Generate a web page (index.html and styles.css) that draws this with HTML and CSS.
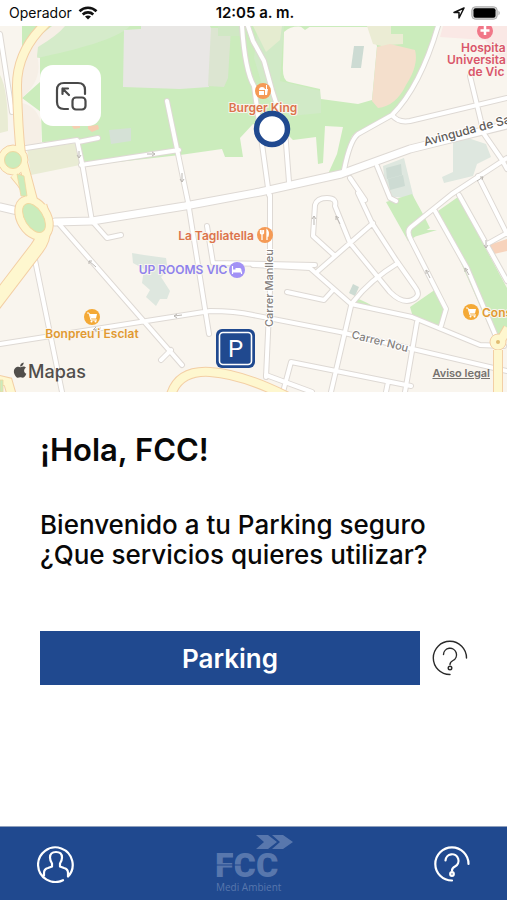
FILE: index.html
```html
<!DOCTYPE html>
<html lang="es">
<head>
<meta charset="utf-8">
<meta name="viewport" content="width=device-width, initial-scale=1">
<title>Parking</title>
<link rel="stylesheet" href="styles.css">
</head>
<body>
<header class="status">
  <div class="status-side">
    <span>Operador</span>
    <svg width="20" height="14" viewBox="0 0 20 14" aria-hidden="true">
      <g fill="none" stroke="#111" stroke-width="2.6"><path d="M1.5 5.2C6.300 .6 13.700 .6 18.500 5.200"/><path d="M4.700 8.500c3-2.800 7.600-2.800 10.600 0"/></g>
      <path d="M10 13.500 7 10.600c1.700-1.500 4.300-1.500 6 0z" fill="#111"/>
    </svg>
  </div>
  <time class="status-time">12:05 a. m.</time>
  <div class="status-side status-end">
    <svg width="12" height="12" viewBox="0 0 12 12" aria-hidden="true"><path d="M11 1 1 5.500h5V11z" fill="none" stroke="#111" stroke-width="1.500" stroke-linejoin="round"/></svg>
    <svg width="30" height="14" viewBox="0 0 30 14" aria-hidden="true"><rect x=".8" y=".8" width="25.400" height="12.400" rx="3.500" fill="#d5d5d5" stroke="#aaa"/><rect x="2.500" y="2.300" width="22" height="9.400" rx="2" fill="#000"/><path d="M27.500 4.500q2.500 2.500 0 5z" fill="#aaa"/></svg>
  </div>
</header>

<section class="map" aria-label="Mapa">
  <svg class="map-canvas" viewBox="0 26 507 366" role="img" aria-label="Mapa de Vic">
    <rect y="26" width="507" height="366" fill="#f9f5ee"/>
    <!-- parks -->
    <path fill="#cbecbc" d="M22 26H437L430 50 415 82 392 114 352 136 343 172 328 174 337 154 343 127 325 126 323 163 318 164 316 137 293 140 287 134 253 124 240 138 243 157 225 157 222 149 180 155 82 166 78 141 42 142 41 112 22 98 40 82 40 58 22 50z"/>
    <path fill="#d5ebca" d="M63 26H130C118 39 75 50 37 58V44z"/>
    <path fill="#f6efe6" d="M52 26h13Q58 35 38 47L37 56Q44 78 22 98L18 80 24 48zM20 103Q35 104 41 122V146H20z"/>
    <path fill="#d1eac7" d="M258 26h26l-4 55 41 10v22l-31 3-24-18-12-40z"/>
    <path fill="#e5ecd0" d="M253 26h29l-2 14-14 12z"/>
    <path fill="#e9e7e5" d="M124 30 141 29V26H210L214 35 209 87 180 89 123 87z"/>
    <path fill="#dce5d1" d="M211 28H231L228 78 224 87 208 86z"/>
    <path fill="#d0e8c4" d="M218 26h26v10h-26z"/>
    <path fill="#f9f5ee" d="M284 32Q292 25 303 27h65l9 19-5 54-14 4-37-5-1-10-31-7Q282 81 283 65z"/>
    <path fill="#cbecbc" d="m300 26 5 4 6-4z"/>
    <path fill="#ebecd4" d="M367 26h24v8h12v10l-15 1-2 2-13-3z"/>
    <path fill="#f4dfcc" d="m377 47 13-3 25 6q4 15-9 35-10 21-28 23l-6-7z"/>
    <path fill="#cddbd3" d="M354 46h10l-3 22h-10z"/>
    <path fill="#d5e1d6" d="m109 130 22-2v13l-20 3z"/>
    <path fill="#f6ceb1" d="m71 125 9 1v2l-6 1zM88 126l10-1 1 4-7 3-4-3z"/>
    <path fill="#e9ecd4" d="M27 149 77 143 80 165 31 175zM0 75Q8 89 8 131L0 133z"/>
    <path fill="#fae8e5" d="M443 26h64v38l-22-24-45-3z"/>
    <path fill="#dee7df" d="m453 133 33 11 5 13-14 7-4 12-29 7-2-6 11-5zM383 166l21-8 10 41-28-3zM132 253l12 2 22 3 2 12-7 7 9 14-3 8h-7l-4 7-10-9 4-7-8-7 2-14-11-6z"/>
    <path fill="#cddbd3" d="m386 168 15-4 1 11-15 4zm2 11 15-4 2 11-15 4zM353 284l6 3-4 9-6-3z"/>
    <path fill="#cbecbc" d="m386 202 26-8 12 22 6 12-22 13zM424 230l13 0-30 9zM438 211l20-14 49 91v52h-12zM410 307l26-18 10 19-6 19-27-10zM356 298q9 3 25 13l-25-6z"/>
    <path fill="#f7d3bc" d="m489 245 18-6v12l-13 3z"/>
    <!-- street casings and surfaces share one geometry -->
    <defs>
      <g id="streets" fill="none" stroke-linecap="round" stroke-linejoin="round">
        <path d="M0 34 12 112M242 26q3 45 12 60l15 109M248 26l5 15 11 20 8 29 13 40 4 52M78 142l20-4M26 148 77 140 82 163 92 221 107 238 121 235M81 165 179 150M167 101 188 202 209 334M35 260 62 392M0 344 210 311Q235 311 253 315L340 332 507 371M60 225 182 365M171 350 161 360M207 226l6 37 102 2"/>
        <path d="M253 265 310 268 351 304 412 317 480 345 504 346M266 377 270 290V195M287 292l37 8 9-10M318 271 373 223M335 256 313 236 315 205Q317 198 327 198T335 206L350 243 390 292Q402 304 412 300T415 287L396 260 372 223 358 193"/>
        <path d="M353 302Q370 280 398 263M351 306 331 392M266 375 312 392M283 392l8-30 120 24M417 322l-12 70M386 392l2-10"/>
        <path d="M438 26Q420 87 392 115L358 134Q350 140 344 170M392 115Q398 123 410 121L507 98M470 76 484 134 502 160 507 169M350 178l15 22M377 166l13 32 6 3M507 158 452 194 411 227Q406 231 411 240L446 309 441 326M459 195 507 281M435 211 467 268 495 334M478 176 507 234M489 243 507 233"/>
      </g>
      <path id="avenue" fill="none" stroke-linecap="round" stroke-linejoin="round" d="M0 207 35 215M55 222 92 221 185 206 260 192 341 174 410 149 507 125"/>
      <path id="ring-road" fill="none" d="M52 18Q16 48 17 88T21 155L34 204M0 161 17 150M14 174Q30 192 35 210M170 398Q177 370 210 372T290 398M-5 379 8 382 12 396M498 350V398M501 340 508 328"/>
      <path id="main-road" fill="none" d="M40 206Q49 233 37 248L-8 307"/>
    </defs>
    <use href="#streets" stroke="#ded9d4" stroke-width="6"/>
    <use href="#avenue" stroke="#ded9d4" stroke-width="9"/>
    <use href="#streets" stroke="#fff" stroke-width="4"/>
    <use href="#avenue" stroke="#fff" stroke-width="7"/>
    <use href="#ring-road" stroke="#f3cfa5" stroke-width="10"/>
    <use href="#main-road" stroke="#f3cfa5" stroke-width="15"/>
    <circle cx="13" cy="160" r="15" fill="#fef7cf" stroke="#f3cfa5"/>
    <ellipse cx="34" cy="218" rx="17" ry="24" transform="rotate(-32 34 218)" fill="#fef7cf" stroke="#f3cfa5"/>
    <circle cx="498" cy="342" r="8" fill="#fef7cf" stroke="#f3cfa5"/>
    <use href="#ring-road" stroke="#fef7cf" stroke-width="8"/>
    <use href="#main-road" stroke="#fef7cf" stroke-width="13"/>
    <circle cx="13" cy="160" r="8.500" fill="#cbecbc" stroke="#f0d8a0"/>
    <ellipse cx="34" cy="218" rx="9" ry="16" transform="rotate(-32 34 218)" fill="#cbecbc" stroke="#f0d8a0"/>
    <path d="m17 174 7 2 3 20h-6zM0 380h3v12H0z" fill="#cbecbc" stroke="#f0d8a0" stroke-width=".8"/>
    <circle cx="498" cy="342" r="2" fill="#e1bc71"/>
    <!-- one-way arrows -->
    <g fill="none" stroke="#bbb7b2">
      <path d="M147 154h8m-3-2 3 2-3 2M79 151v7m-2-3 2 3 2-3M182 173v9m-2-3 2 3 2-3M96 267l-7-6m0 3v-3h3M182 315l-8 1m3-2-3 2 3 2M101 328l-8 2m3-3-3 3 4 1M314 216v9m-2-6 2-3 2 3M340 224l-4-8m0 4v-4l3 2M430 278l-4-8m0 4v-4l3 2M469 275l-4-7m0 4v-4l3 2M486 240v8m-2-3 2 3 2-3M477 181l6-4m-3 0h3l-1 3"/>
    </g>
    <!-- labels -->
    <g class="place" text-anchor="middle">
      <text x="263" y="112" fill="#dc744c">Burger King</text>
      <text x="216" y="240" fill="#dc744c">La Tagliatella</text>
      <text x="183" y="274" fill="#8f82ec">UP ROOMS VIC</text>
      <text x="92" y="338" fill="#e19a32">Bonpreu i Esclat</text>
    </g>
    <g class="place">
      <text x="482" y="317" fill="#e19a32">Cons</text>
      <g fill="#d9566a"><text x="461" y="52">Hospita</text><text x="447" y="64">Universita</text><text x="468" y="76">de Vic</text></g>
    </g>
    <g class="street">
      <text transform="translate(273 327) rotate(-90)">Carrer Manlleu</text>
      <text transform="translate(351 338) rotate(14)">Carrer Nou</text>
      <text class="avenue-name" transform="translate(425 146) rotate(-15)">Avinguda de Sa</text>
    </g>
    <!-- place markers -->
    <g fill="#f59a55"><circle cx="263" cy="91" r="8"/><circle cx="265" cy="235" r="8"/></g>
    <g fill="#f4a936"><circle cx="92" cy="317" r="8"/><circle cx="471" cy="312" r="8"/></g>
    <circle cx="237" cy="270" r="8" fill="#a291f5"/>
    <circle cx="485" cy="31" r="8" fill="#f17788"/>
    <path d="M485 26v9m-4.500-4.500h9" stroke="#fff" stroke-width="2.500"/>
    <path d="M259 90q0-3 3-3t3 3zM259 91h5v4h-5zM265 89h3l-1 6h-2zM266 89v-4h1v4z" fill="#fff"/>
    <path d="M262 230v4m-1.500-4v3q1.500 2 3 0v-3M262 234v6m5 0v-10q2 2 1 6h-1" fill="none" stroke="#fff" stroke-width="1.300"/>
    <path d="M232.500 266v8m0-2h9v2" fill="none" stroke="#fff" stroke-width="1.200"/>
    <path d="M233 269.500h2.500V268h4q2 0 2 2v2H233z" fill="#fff"/>
    <g id="cart" fill="#fff"><path d="M87 313h2l2 7h6" fill="none" stroke="#fff"/><path d="M89.500 314H97l-1 4.500h-5z"/><circle cx="91.500" cy="321.500" r="1"/><circle cx="95.500" cy="321.500" r="1"/></g>
    <use href="#cart" x="379" y="-5"/>
    <circle cx="272" cy="129" r="15.500" fill="#fff" stroke="#20498f" stroke-width="5.500"/>
    <rect x="216" y="329" width="39" height="39" rx="6" fill="#20498f"/>
    <rect x="219.500" y="332.500" width="32" height="32" rx="3.500" fill="none" stroke="#fff" stroke-width="1.600"/>
    <text class="sign" x="235.500" y="357" text-anchor="middle">P</text>
    <!-- provider mark -->
    <path fill="#514e4b" d="M20.500 367.300c-1.500-.8-2.500-.9-3.800-.2-3.500 1.600-3.700 6.100-.7 9.600 1.600 1.800 2.600.7 4.300.5 1.400-.2 2.500 1.200 4-.2 1-.9 1.700-2.200 2-3.300-2.700-1.100-2.900-4.500-.3-5.900-1.400-1.900-3.300-1.600-5.500-.5zM20.100 366.500c0-2.200 1.600-3.700 3.600-4 .2 2.200-1.500 4-3.600 4z"/>
    <text class="provider" x="28" y="378">Mapas</text>
  </svg>
  <button class="expand" type="button" aria-label="Ampliar mapa">
    <svg width="32" height="30" viewBox="0 0 32 30" fill="none" stroke="#494949" stroke-width="2.200" stroke-linecap="round" stroke-linejoin="round" aria-hidden="true"><path d="M13 28H9q-7 0-7-7V9q0-7 7-7h14q7 0 7 7v4"/><rect x="17.500" y="16.500" width="13" height="12" rx="3.500"/><path d="M14 14 7.500 7.500M7.500 13V7.500H13"/></svg>
  </button>
  <a class="legal" href="#legal">Aviso legal</a>
</section>

<main class="content">
  <h1>¡Hola, FCC!</h1>
  <p>Bienvenido a tu Parking seguro<br>¿Que servicios quieres utilizar?</p>
  <div class="service">
    <button class="service-button" type="button">Parking</button>
    <button class="icon-button" type="button" aria-label="Ayuda sobre Parking">
      <svg width="36" height="36" viewBox="0 0 36 36" fill="none" stroke="#2a2a2a" stroke-width="1.400" stroke-linecap="round" aria-hidden="true"><g id="help"><path d="M18 34.500A16.600 16.600 0 1 1 34.500 18"/><path d="M11.500 14.500a6.500 6.500 0 1 1 9.500 6q-3 1.500-3 4"/><circle cx="18" cy="28" r="1.800"/></g></svg>
    </button>
  </div>
</main>

<nav class="tabs" aria-label="Principal">
  <button class="icon-button" type="button" aria-label="Perfil">
    <svg width="38" height="38" viewBox="0 0 38 38" fill="none" stroke="#fff" stroke-width="2.200" stroke-linecap="round" stroke-linejoin="round" aria-hidden="true"><path d="M26 35.200A17.300 17.300 0 1 1 31 31.500V28q0-4-4-5l-4-1.500v-3q2-3 2-6 0-5.500-6-5.500t-6 5.500q0 3 2 6v3L11 23q-4 1-4 5v2.500"/></svg>
  </button>
  <svg class="logo" width="77" height="60" viewBox="0 0 77 60" role="img" aria-label="FCC Medi Ambient">
    <path d="M40 1H52L61 8 52 15H40L48 8zM56 1H67L77 8 67 15H56L64 8z"/>
    <text class="logo-name" x="-1" y="43">FCC</text>
    <path class="logo-cut" d="M0 31h30M18 16v30"/>
    <text class="logo-unit" x="0" y="57">Medi Ambient</text>
  </svg>
  <button class="icon-button" type="button" aria-label="Ayuda">
    <svg width="36" height="36" viewBox="0 0 36 36" fill="none" stroke="#fff" stroke-width="2.200" stroke-linecap="round" aria-hidden="true"><use href="#help"/></svg>
  </button>
</nav>
</body>
</html>
```
FILE: styles.css
```css
* { box-sizing: border-box; }

body {
  margin: 0;
  min-height: 100vh;
  display: flex;
  flex-direction: column;
  background: #fff;
  color: #080808;
  font-family: Inter, "Liberation Sans", sans-serif;
}

button {
  border: 0;
  padding: 0;
  font: inherit;
  cursor: pointer;
}

svg { display: block; }

.status {
  height: 26px;
  padding: 0 6px 0 9px;
  display: grid;
  grid-template-columns: 1fr auto 1fr;
  align-items: center;
  font-size: 14px;
  line-height: 26px;
}

.status-side {
  display: flex;
  align-items: center;
  gap: 6px;
}

.status-end { justify-content: flex-end; }
.status-time { font-weight: 600; font-size: 15px; }

.map { position: relative; }
.map-canvas { width: 100%; height: auto; }

.place text {
  font-size: 12px;
  font-weight: 600;
  paint-order: stroke;
  stroke: #f9f5ee;
  stroke-width: 2px;
}

.street text {
  font-size: 11px;
  font-weight: 500;
  fill: #85817d;
  paint-order: stroke;
  stroke: #fff;
  stroke-width: 2px;
}

.street .avenue-name { font-size: 12px; fill: #5f5c59; }

.sign { font: 400 24px Roboto, sans-serif; fill: #fff; }
.provider { font-size: 18px; font-weight: 500; fill: #514e4b; }

.expand {
  position: absolute;
  top: 39px;
  left: 40px;
  width: 61px;
  height: 61px;
  display: grid;
  place-items: center;
  border-radius: 13px;
  background: #fff;
}

.legal {
  position: absolute;
  right: 17px;
  bottom: 11px;
  color: #76726e;
  font-size: 11px;
  font-weight: 600;
  line-height: 16px;
}

.content {
  flex: 1;
  padding: 38px 39px 40px 40px;
}

h1 {
  margin: 0 0 40px;
  font-size: 31px;
  font-weight: 600;
  line-height: 40px;
}

p {
  margin: 0 0 61px;
  font-size: 26px;
  font-weight: 500;
  line-height: 30px;
}

.service {
  display: flex;
  align-items: center;
  gap: 12px;
}

.service-button {
  flex: 1;
  height: 54px;
  background: #20498f;
  color: #fff;
  font-size: 26px;
  font-weight: 600;
}

.icon-button { background: none; color: inherit; }

.tabs {
  height: 74px;
  padding: 0 37px;
  display: flex;
  align-items: center;
  justify-content: space-between;
  border-top: 1px solid #8fa0bd;
  background: #20498f;
}

.logo { fill: #5877ad; }
.logo-name { font: 900 34px Roboto, sans-serif; }
.logo-unit { font: 10px "Open Sans", sans-serif; }
.logo-cut { fill: none; stroke: #20498f; stroke-width: 1; }
```
